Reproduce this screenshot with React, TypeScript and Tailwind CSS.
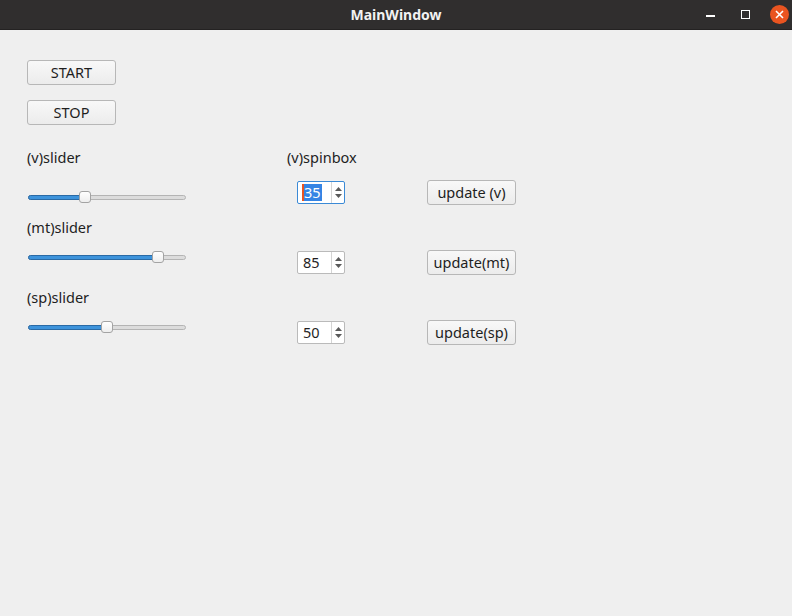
const font = { fontFamily: '"Noto Sans", "Open Sans", sans-serif' }

function Button({ label }: { label: string }) {
  return (
    <button className="h-[25px] w-[89px] rounded-[3px] border border-[#b7b7b7] bg-gradient-to-b from-[#f8f8f8] to-[#ececec] text-[14.5px] leading-none text-[#1e1e1e]">
      {label}
    </button>
  )
}

function Slider({ value }: { value: number }) {
  const left = Math.round((value / 100) * 146)
  return (
    <div className="relative h-[12px] w-[159px]">
      <div className="absolute left-[1px] right-0 top-[4px] h-[5px] rounded-[3px] border border-[#b4b4b4] bg-[#dcdcdc]" />
      <div
        className="absolute left-[1px] top-[4px] h-[5px] rounded-l-[3px] border border-[#2a6aa5] bg-[#3d93db]"
        style={{ width: left + 4 }}
      />
      <div
        className="absolute top-0 h-[12px] w-[12px] rounded-[3px] border border-[#a3a3a3] bg-gradient-to-b from-white to-[#eeeeee]"
        style={{ left: left + 1 }}
      />
    </div>
  )
}

function SpinBox({ value, focused }: { value: number; focused?: boolean }) {
  return (
    <div
      className={
        focused
          ? 'flex h-[23px] w-[48px] rounded-[2px] border border-[#3b8ad6] bg-white'
          : 'flex h-[23px] w-[48px] rounded-[2px] border border-[#bababa] bg-white'
      }
    >
      <div className="flex flex-1 items-center pl-[4px]">
        {focused ? (
          <span className="flex h-[17px] items-center border-l-2 border-[#e95420] bg-[#3584e4] pr-[1px] text-[14.5px] text-white">
            {value}
          </span>
        ) : (
          <span className="pl-[1px] text-[14.5px] text-[#1e1e1e]">{value}</span>
        )}
      </div>
      <div className="flex w-[13px] flex-col items-center justify-center gap-[3px] border-l border-[#d4d4d4]">
        <svg width="7" height="4" viewBox="0 0 7 4">
          <path d="M0 4 L3.5 0 L7 4 Z" fill="#5a5a5a" />
        </svg>
        <svg width="7" height="4" viewBox="0 0 7 4">
          <path d="M0 0 L3.5 4 L7 0 Z" fill="#5a5a5a" />
        </svg>
      </div>
    </div>
  )
}

function Label({ text }: { text: string }) {
  return <div className="h-[20px] text-[14.5px] leading-[20px] text-[#1e1e1e]">{text}</div>
}

export default function App() {
  return (
    <div className="flex h-[616px] w-[792px] flex-col bg-[#efefef]" style={font}>
      <div className="relative flex h-[30px] shrink-0 items-center justify-center border-b border-[#242222] bg-[#302e2e]">
        <span className="text-[14px] font-bold text-[#f2f2f2]">MainWindow</span>
        <div className="absolute right-[3px] top-0 flex h-[29px] items-center">
          <div className="mr-[26px] mt-[2px] h-[2px] w-[9px] bg-white" />
          <div className="mr-[20px] h-[9px] w-[9px] border-[1.5px] border-white" />
          <div className="flex h-[19px] w-[19px] items-center justify-center rounded-full bg-[#e95420]">
            <svg width="9" height="9" viewBox="0 0 9 9">
              <path d="M1 1 L8 8 M8 1 L1 8" stroke="white" strokeWidth="1.6" />
            </svg>
          </div>
        </div>
      </div>

      <div className="flex pl-[27px]">
        <div className="flex w-[159px] flex-col">
          <div className="mt-[30px]">
            <Button label="START" />
          </div>
          <div className="mt-[15px]">
            <Button label="STOP" />
          </div>
          <div className="mt-[22px]">
            <Label text="(v)slider" />
          </div>
          <div className="mt-[24px]">
            <Slider value={35} />
          </div>
          <div className="mt-[14px]">
            <Label text="(mt)slider" />
          </div>
          <div className="mt-[14px]">
            <Slider value={85} />
          </div>
          <div className="mt-[24px]">
            <Label text="(sp)slider" />
          </div>
          <div className="mt-[14px]">
            <Slider value={50} />
          </div>
        </div>

        <div className="ml-[101px] flex w-[140px] flex-col">
          <div className="mt-[117px]">
            <Label text="(v)spinbox" />
          </div>
          <div className="ml-[10px] mt-[14px]">
            <SpinBox value={35} focused />
          </div>
          <div className="ml-[10px] mt-[47px]">
            <SpinBox value={85} />
          </div>
          <div className="ml-[10px] mt-[47px]">
            <SpinBox value={50} />
          </div>
        </div>

        <div className="flex flex-col gap-[45px] pt-[150px]">
          <Button label="update (v)" />
          <Button label="update(mt)" />
          <Button label="update(sp)" />
        </div>
      </div>
    </div>
  )
}
